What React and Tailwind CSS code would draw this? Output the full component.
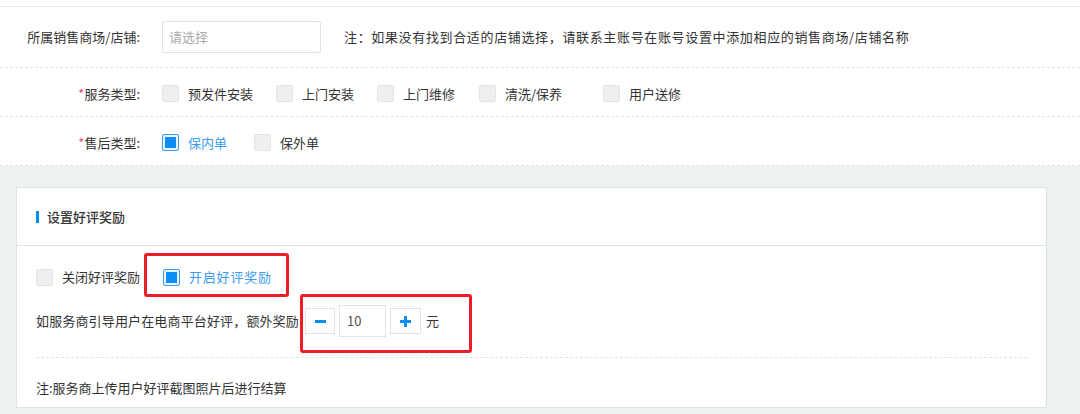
import React from "react";

const font = { fontFamily: '"Noto Sans CJK SC", "Noto Sans", sans-serif' };

function Box({ checked }) {
  if (checked) {
    return (
      <span className="flex h-[17px] w-[17px] shrink-0 items-center justify-center rounded-[2px] border border-[#3d9bf0] bg-[#eaf4fd]">
        <span className="h-[11px] w-[11px] bg-[#0d8ef5]" />
      </span>
    );
  }
  return <span className="h-[17px] w-[17px] shrink-0 rounded-[2px] border border-[#e2e4e6] bg-[#efefef]" />;
}

function Opt({ label, checked, className = "", textClass = "" }) {
  return (
    <div className={"flex items-center gap-[9px] " + className}>
      <Box checked={checked} />
      <span className={(checked ? "text-[#3d9bf0] " : "text-[#333] ") + textClass}>{label}</span>
    </div>
  );
}

function Label({ children, req }) {
  return (
    <div className="w-[140px] shrink-0 text-right text-[#333]">
      {req && <span className="text-[#f0506e]">*</span>}
      {children}
    </div>
  );
}

export default function App() {
  return (
    <div style={font} className="h-[414px] w-[1080px] overflow-hidden bg-white text-[13px] leading-[20px]">
      <div className="pt-[6px]">
        <div className="flex h-[61px] items-center border-t border-[#e6ebec] pb-[1px]">
          <Label>所属销售商场/店铺:</Label>
          <div className="ml-[22px] flex h-[32px] w-[159px] items-center rounded-[2px] border border-[#dfe4e6] px-[6px] text-[#aaa]">
            请选择
          </div>
          <div className="ml-[23px] tracking-[0.65px] text-[#333]">注：如果没有找到合适的店铺选择，请联系主账号在账号设置中添加相应的销售商场/店铺名称</div>
        </div>
        <div className="flex h-[49px] items-center border-t border-dashed border-[#dfe5e7] pt-[3px]">
          <Label req>服务类型:</Label>
          <div className="ml-[22px] flex items-center">
            <Opt label="预发件安装" className="w-[114px]" />
            <Opt label="上门安装" className="w-[101px]" />
            <Opt label="上门维修" className="w-[102px]" />
            <Opt label="清洗/保养" className="w-[124px]" />
            <Opt label="用户送修" />
          </div>
        </div>
        <div className="flex h-[50px] items-center border-t border-b border-dashed border-[#dfe5e7] pt-[3px]">
          <Label req>售后类型:</Label>
          <div className="ml-[22px] flex items-center">
            <Opt label="保内单" checked className="w-[92px]" />
            <Opt label="保外单" />
          </div>
        </div>
      </div>

      <div className="bg-[#edf1f2] pb-[7px] pl-[16px] pr-[33px] pt-[21px]">
        <div className="border border-[#dde4e6] bg-white">
          <div className="flex h-[58px] items-center border-b border-[#dde4e6] pl-[19px] pt-[1px]">
            <span className="mr-[8px] h-[12px] w-[3px] bg-[#0d8ef5]" />
            <span className="font-medium text-[#333]">设置好评奖励</span>
          </div>
          <div className="px-[19px] pb-[9px] pt-[15px]">
            <div className="flex h-[32px] items-center">
              <Opt label="关闭好评奖励" className="w-[127px]" />
              <div className="relative">
                <Opt label="开启好评奖励" checked textClass="tracking-[0.8px]" />
                <div className="pointer-events-none absolute -left-[19px] -right-[17px] -top-[14px] -bottom-[10px] rounded-[3px] border-[3px] border-[#ee1c25]" />
              </div>
            </div>
            <div className="mt-[12px] flex h-[32px] items-center">
              <span className="tracking-[0.15px] text-[#333]">如服务商引导用户在电商平台好评，额外奖励</span>
              <div className="relative ml-[6px] flex items-center">
                <div className="flex h-[26px] w-[30px] items-center justify-center border border-[#dfe4e6] bg-white">
                  <span className="h-[3px] w-[11px] bg-[#0d8ef5]" />
                </div>
                <div className="ml-[4px] flex h-[32px] w-[47px] items-center border border-[#dfe4e6] pl-[7px] text-[#555]">10</div>
                <div className="relative ml-[4px] flex h-[26px] w-[31px] items-center justify-center border border-[#dfe4e6] bg-white">
                  <span className="absolute h-[3px] w-[11px] bg-[#0d8ef5]" />
                  <span className="absolute h-[11px] w-[3px] bg-[#0d8ef5]" />
                </div>
                <span className="ml-[5px] text-[#333]">元</span>
                <div className="pointer-events-none absolute -left-[5px] -right-[33px] -top-[11px] -bottom-[16px] rounded-[3px] border-[3px] border-[#ee1c25]" />
              </div>
            </div>
            <div className="mt-[20px] border-t border-dashed border-[#dfe5e7]" />
            <div className="mt-[20px] text-[#333]">注:服务商上传用户好评截图照片后进行结算</div>
          </div>
        </div>
      </div>
    </div>
  );
}
